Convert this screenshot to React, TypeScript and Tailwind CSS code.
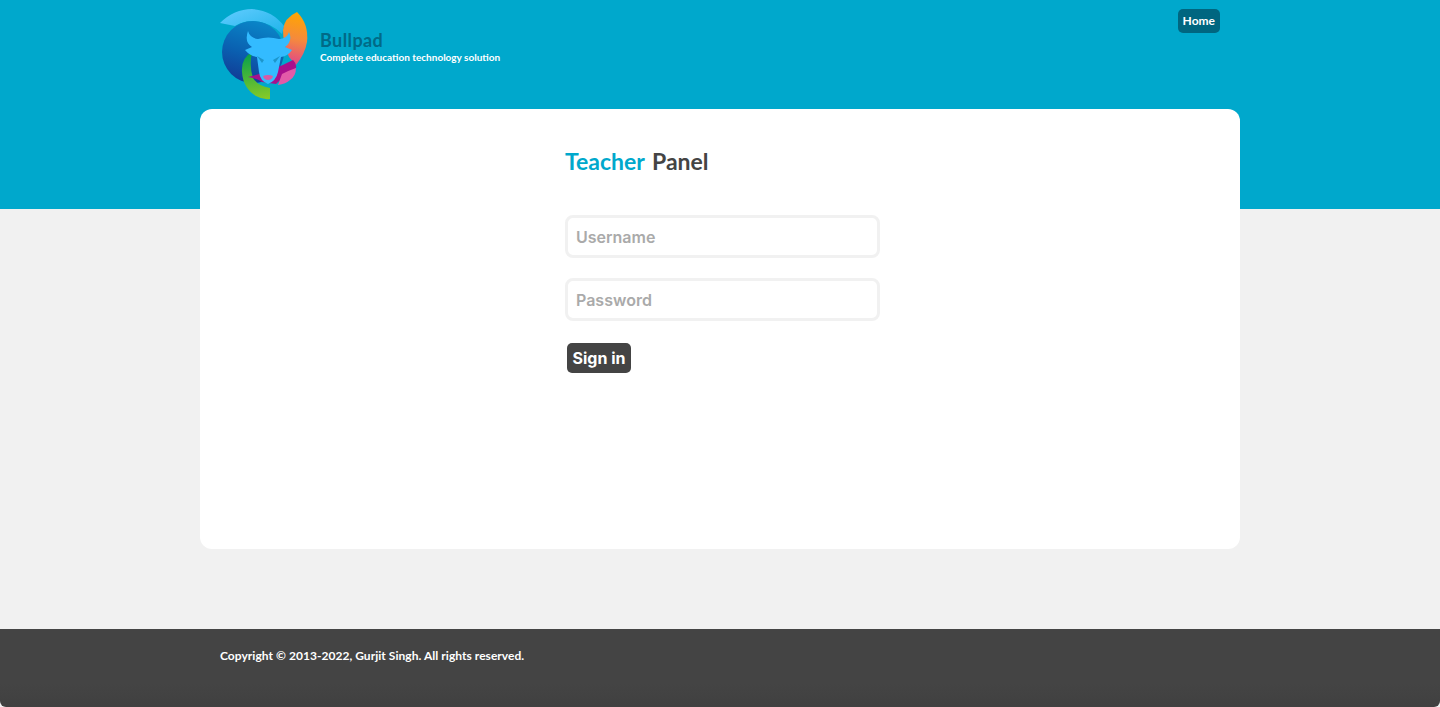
import React from 'react';

const Logo = () => (
  <svg viewBox="219 9 90 92" className="-ml-[1px] h-[92px] w-[90px] shrink-0">
    <defs>
      <linearGradient id="arc" x1="0" y1="0" x2="1" y2="1">
        <stop offset="0" stopColor="#62ccff" />
        <stop offset="1" stopColor="#1fb4ea" />
      </linearGradient>
      <linearGradient id="disc" x1="0.6" y1="0" x2="0.3" y2="1">
        <stop offset="0" stopColor="#0a86c8" />
        <stop offset="0.55" stopColor="#0a5fb0" />
        <stop offset="1" stopColor="#123a94" />
      </linearGradient>
      <linearGradient id="orange" x1="0.5" y1="0" x2="0.4" y2="1">
        <stop offset="0" stopColor="#ffa600" />
        <stop offset="0.5" stopColor="#f58a3c" />
        <stop offset="1" stopColor="#e0458c" />
      </linearGradient>
      <linearGradient id="green" x1="0.4" y1="0" x2="0.5" y2="1">
        <stop offset="0" stopColor="#06a04c" />
        <stop offset="1" stopColor="#84c928" />
      </linearGradient>
    </defs>
    <path d="M220 23Q234 9 252 9Q272 10 284 26L282 34Q270 22 253 21Q243 21 235 26Z" fill="url(#arc)" />
    <circle cx="253" cy="52" r="31" fill="url(#disc)" />
    <path d="M297 12Q309 24 307 42Q305 54 296 65L289 57Q283 44 283 30Q284 18 297 12Z" fill="url(#orange)" />
    <path d="M252 52Q241 58 242 72Q243 88 256 96Q263 100 270 99L270 88Q258 86 253 78Q249 66 252 52Z" fill="url(#green)" />
    <path d="M248 77Q270 72 293 60Q297 64 296 68Q286 74 276 84L262 82Q256 78 248 77Z" fill="#a80f8c" />
    <path d="M282 74Q290 70 296 68Q296 76 290 80Q286 84 278 85Z" fill="#e25aa8" />
    <path d="M248 31Q244 42 252 47L245 50Q250 56 257 57L259 72Q260 81 268 84Q276 81 278 72L281 57Q288 56 292 50L285 47Q293 41 289 32Q287 39 279 39Q268 36 258 39Q250 38 248 31Z" fill="#33bbff" />
    <path d="M257 56L264 60L262 63Z" fill="#1c96cc" />
    <path d="M280 56L273 60L275 63Z" fill="#1c96cc" />
    <path d="M263 76Q268 74 273 76Q272 80 268 80Q264 80 263 76Z" fill="#d85aa5" />
  </svg>
);

const App = () => {
  return (
    <div className="flex min-h-[707px] flex-col bg-[#f1f1f1]" style={{ fontFamily: 'Lato, sans-serif' }}>
      <header className="h-[209px] bg-[#00a8cc]">
        <div className="mx-auto flex w-[1000px] items-start justify-between">
          <div className="flex items-start pt-[9px]">
            <Logo />
            <div className="ml-[11px] pt-[20px]">
              <h1 className="text-[18px] leading-[22px] font-bold tracking-[0.4px] text-[#006a87]">Bullpad</h1>
              <p className="text-[10px] leading-[13px] font-bold text-white">Complete education technology solution</p>
            </div>
          </div>
          <a className="mt-[9px] rounded-[5px] bg-[#006680] px-[5px] text-[12px] leading-[24px] font-bold text-white">Home</a>
        </div>
      </header>

      <main className="mx-auto -mt-[100px] h-[440px] w-[1040px] rounded-xl bg-white pt-[37px] pl-[365px]">
        <h2 className="text-[23px] leading-[30px] font-bold [word-spacing:2px] text-[#444444]">
          <span className="text-[#00a8cc]">Teacher</span> Panel
        </h2>
        <form className="mt-[39px] flex flex-col gap-[20px]" style={{ fontFamily: 'Inter, sans-serif' }}>
          <input
            placeholder="Username"
            className="h-[43px] w-[315px] rounded-lg border-[3px] border-[#f1f1f1] bg-white px-[8px] text-[16px] font-semibold outline-none placeholder:text-[#aaaaaa]"
          />
          <input
            placeholder="Password"
            className="h-[43px] w-[315px] rounded-lg border-[3px] border-[#f1f1f1] bg-white px-[8px] text-[16px] font-semibold outline-none placeholder:text-[#aaaaaa]"
          />
        </form>
        <button
          className="mt-[22px] ml-[2px] h-[30px] w-[64px] rounded-[5px] bg-[#444444] text-[16px] font-bold text-white"
          style={{ fontFamily: 'Inter, sans-serif' }}
        >
          Sign in
        </button>
      </main>

      <footer className="mt-[80px] h-[78px] rounded-b-[6px] bg-gradient-to-b from-[#444444] from-70% to-[#404040]">
        <p className="mx-auto w-[1000px] pt-[18px] text-[12px] leading-[18px] font-bold tracking-[0.04px] text-white">
          Copyright © 2013-2022, Gurjit Singh. All rights reserved.
        </p>
      </footer>
    </div>
  );
};

export default App;
